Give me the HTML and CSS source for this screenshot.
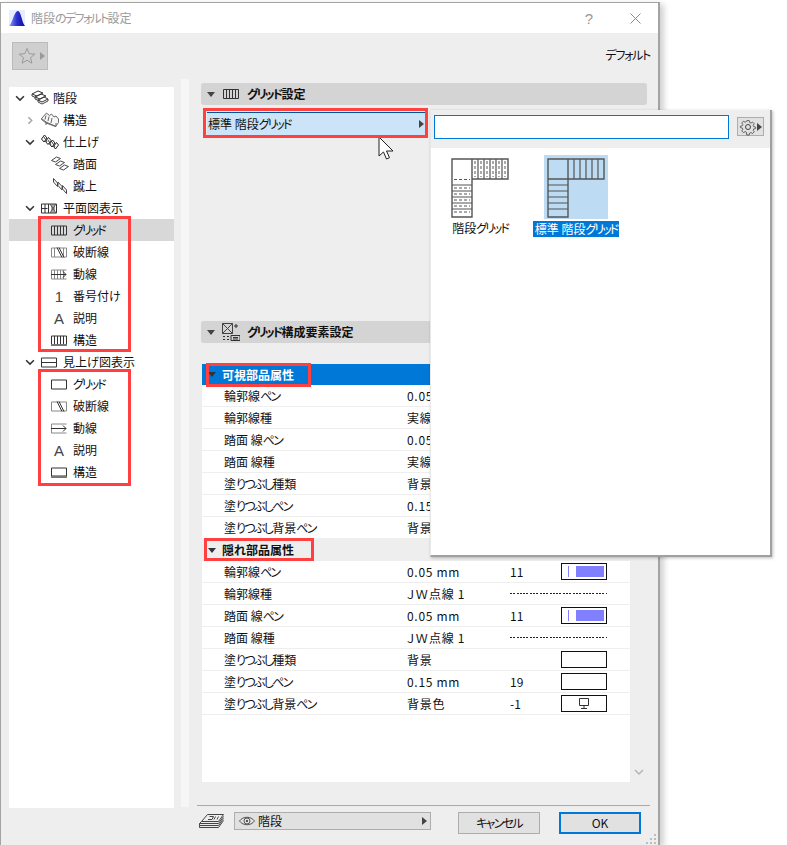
FILE: index.html
```html
<!DOCTYPE html>
<html lang="ja">
<head>
<meta charset="utf-8">
<title>階段のデフォルト設定</title>
<link rel="stylesheet" href="styles.css">
</head>
<body>
<div class="dialog">
  <header class="titlebar">
    <svg class="logo" width="16" height="16" viewBox="0 0 16 16"><defs><linearGradient id="lg" x1="0" x2="1" y1="0" y2="0"><stop offset="0" stop-color="#8f9cf5"/><stop offset=".5" stop-color="#2a2fd0"/><stop offset="1" stop-color="#0a0f8c"/></linearGradient></defs><rect width="16" height="16" fill="#e9ecff"/><path d="M0 16C3 15 5 1 9 1C12 1 13 13 16 16Z" fill="url(#lg)"/></svg>
    <span class="title">階段<span class="k">のデフォルト</span>設定</span>
    <span class="help">?</span>
    <svg class="close" width="11" height="11" viewBox="0 0 11 11"><path d="M.5.500L10.500 10.500M10.500.500L.5 10.500" stroke="#8a8a8a" fill="none"/></svg>
  </header>
  <div class="toolbar">
    <div class="favbtn">
      <svg width="18" height="18" viewBox="0 0 18 18"><path d="M9 1.500l2.200 5.200 5.600.4-4.300 3.600 1.400 5.500L9 13.200l-4.900 3 1.400-5.500L1.200 7.100l5.600-.4z" fill="none" stroke="#9a9a9a"/></svg>
      <span class="arrow-r grey"></span>
    </div>
    <span class="deflabel k">デフォルト</span>
  </div>
  <div class="main">
    <nav class="tree">
      <div class="row lv0"><svg class="chev" viewBox="0 0 9 6"><path d="M1 1l3.500 3.500L8 1"/></svg><svg class="ic tall" viewBox="0 0 18 16"><path d="M1 4l6-3 5 2-6 3zM4 7l6-3 5 2-6 3zM7 10l6-3 4 2-6 3z" fill="none" stroke="#333"/><path d="M1 4v2l5 2M4 7v2l5 2M7 10v2l4 2 6-3V9" fill="none" stroke="#444"/></svg><span>階段</span></div>
      <div class="row lv1"><svg class="chev pale" viewBox="0 0 9 6"><path d="M3 0l3 3-3 3"/></svg><svg class="ic tall" viewBox="0 0 18 16"><path d="M.5 6.500l5-5.500 3 2.500 2-1.500 2.500 3 2-1 2.500 3v3.500l-3 4-9.500-3.500-4.500-3.500z" fill="#f6f6f6" stroke="#666"/><path d="M.5 6.500l4.500 3.500 10 4.500 0-3.500M5 3.500l-1 4M8 4.500l-1 4.500M11 6l-1 5M5 10v3" fill="none" stroke="#666"/></svg><span>構造</span></div>
      <div class="row lv1"><svg class="chev" viewBox="0 0 9 6"><path d="M1 1l3.500 3.500L8 1"/></svg><svg class="ic tall" viewBox="0 0 18 16"><path d="M.5 5l3-4 2.500 3-3 4zM4.500 7.500l3-4 2.500 3-3 4zM8.500 10l3-4 2.500 3-3 4zM12.500 12.500l3-4 2 2.500-3 4z" fill="none" stroke="#222"/><path d="M3 3l3 5M7 6l3 5M11 8l3 5" stroke="#444" fill="none"/></svg><span>仕上げ</span></div>
      <div class="row lv2"><svg class="ic tall" viewBox="0 0 18 16"><path d="M.5 4.500l5-3.500 4 1.500-5 3.500zM4.500 8.500l5-3.500 4 1.500-5 3.500zM8.500 12.500l5-3.500 4 1.500-5 3.500z" fill="none" stroke="#444"/></svg><span>踏面</span></div>
      <div class="row lv2"><svg class="ic tall" viewBox="0 0 18 16"><path d="M2.500.500l4 4.500v3.500l-4-4.500zM7 4l4 4.500v3.500l-4-4.500zM11.500 7.500l4 4.500v3.500l-4-4.500z" fill="none" stroke="#444"/></svg><span>蹴上</span></div>
      <div class="row lv1"><svg class="chev" viewBox="0 0 9 6"><path d="M1 1l3.500 3.500L8 1"/></svg><svg class="ic" viewBox="0 0 16 12"><path d="M.5 1.500h15v9H.5zM.5 6h6M4 1.500v9M7.500 1.500v9" fill="none" stroke="#333"/><path d="M9 1.500l6 9M15 1.500l-6 9M11 1.500v9M13 1.500v9" stroke="#555"/></svg><span>平面図表示</span></div>
      <div class="row lv2 selected"><svg class="ic" viewBox="0 0 16 12"><path d="M.5 1.500h15v9H.5zM3.500 1.500v9M6.500 1.500v9M9.500 1.500v9M12.500 1.500v9" fill="none" stroke="#333"/></svg><span class="k2">グリッド</span></div>
      <div class="row lv2"><svg class="ic" viewBox="0 0 16 12"><path d="M.5 1.500h15v9H.5zM3.500 1.500v9M12.500 1.500v9" fill="none" stroke="#888"/><path d="M6 1l5 10M8 1l5 10" stroke="#333"/></svg><span>破断線</span></div>
      <div class="row lv2"><svg class="ic" viewBox="0 0 16 12"><path d="M.5 1.500h15M.5 10.500h15M.5 1.500v9M3.500 1.500v9M6.500 1.500v9M9.500 1.500v9M12.500 1.500v9" fill="none" stroke="#888"/><path d="M0 6h15M12 3l3 3-3 3" fill="none" stroke="#333"/></svg><span>動線</span></div>
      <div class="row lv2"><span class="ic glyph">1</span><span>番号付け</span></div>
      <div class="row lv2"><span class="ic glyph">A</span><span>説明</span></div>
      <div class="row lv2"><svg class="ic" viewBox="0 0 16 12"><path d="M.5 1.500h15M3.500 1.500v8M6.500 1.500v8M9.500 1.500v8M12.500 1.500v8M.5 1.500v8M15.500 1.500v8" fill="none" stroke="#333"/><path d="M0 10.500h16" stroke="#777" stroke-width="2"/></svg><span>構造</span></div>
      <div class="row lv1"><svg class="chev" viewBox="0 0 9 6"><path d="M1 1l3.500 3.500L8 1"/></svg><svg class="ic" viewBox="0 0 16 12"><path d="M.5 1.500h15v9H.5zM.5 6h15" fill="none" stroke="#333"/></svg><span>見上げ図表示</span></div>
      <div class="row lv2"><svg class="ic" viewBox="0 0 16 12"><path d="M.5 1.500h15v9H.5z" fill="none" stroke="#333"/></svg><span class="k2">グリッド</span></div>
      <div class="row lv2"><svg class="ic" viewBox="0 0 16 12"><path d="M.5 1.500h15v9H.5z" fill="none" stroke="#888"/><path d="M6 1l5 10M8 1l5 10" stroke="#333"/></svg><span>破断線</span></div>
      <div class="row lv2"><svg class="ic" viewBox="0 0 16 12"><path d="M.5 1.500h15M.5 10.500h15M.5 1.500v9" fill="none" stroke="#888"/><path d="M0 6h15M12 3l3 3-3 3" fill="none" stroke="#333"/></svg><span>動線</span></div>
      <div class="row lv2"><span class="ic glyph">A</span><span>説明</span></div>
      <div class="row lv2"><svg class="ic" viewBox="0 0 16 12"><path d="M.5 1.500h15v8H.5z" fill="none" stroke="#333"/><path d="M0 10.500h16" stroke="#777" stroke-width="2"/></svg><span>構造</span></div>
    </nav>
    <div class="splitter"></div>
    <section class="content">
      <div class="secthead">
        <span class="arrow-d"></span>
        <svg class="sect-ic" width="16" height="12" viewBox="0 0 16 12"><path d="M.5 1.500h15v9H.5zM3.500 1.500v9M6.500 1.500v9M9.500 1.500v9M12.500 1.500v9" fill="none" stroke="#333"/></svg>
        <span><span class="k2">グリッド</span>設定</span>
      </div>
      <div class="favselect"><span>標準 階段<span class="k2">グリッド</span></span><span class="arrow-r"></span></div>
      <div class="secthead second">
        <span class="arrow-d"></span>
        <svg class="sect-ic big" width="18" height="18" viewBox="0 0 18 18"><path d="M.5.500h10v10H.5zM.5.500l10 10M10.500.500l-10 10" fill="none" stroke="#444"/><path d="M14 1v4M12 3h4M9 12.500h9v5H9zM11 14.500h5M11 16h5M1 13.500h2M1 16.500h2M5 13.500h2M5 16.500h2" stroke="#333" fill="none"/></svg>
        <span><span class="k2">グリッド</span>構成要素設定</span>
      </div>
      <div class="tablewrap">
        <div class="table">
          <div class="grouphead blue"><span class="arrow-d dark"></span><span>可視部品属性</span></div>
          <div class="trow"><span class="c-name">輪郭線<span class="k">ペン</span></span><span class="c-val">0.05 mm</span><span class="c-num">11</span><span class="swatch pen"></span></div>
          <div class="trow"><span class="c-name">輪郭線種</span><span class="c-val">実線</span></div>
          <div class="trow"><span class="c-name">踏面 線<span class="k">ペン</span></span><span class="c-val">0.05 mm</span><span class="c-num">11</span><span class="swatch pen"></span></div>
          <div class="trow"><span class="c-name">踏面 線種</span><span class="c-val">実線</span></div>
          <div class="trow"><span class="c-name">塗<span class="k">りつぶし</span>種類</span><span class="c-val">背景</span></div>
          <div class="trow"><span class="c-name">塗<span class="k">りつぶしペン</span></span><span class="c-val">0.15 mm</span><span class="c-num">19</span></div>
          <div class="trow"><span class="c-name">塗<span class="k">りつぶし</span>背景<span class="k">ペン</span></span><span class="c-val">背景色</span><span class="c-num">-1</span></div>
          <div class="grouphead"><span class="arrow-d dark"></span><span>隠れ部品属性</span></div>
          <div class="trow"><span class="c-name">輪郭線<span class="k">ペン</span></span><span class="c-val">0.05 mm</span><span class="c-num">11</span><span class="swatch pen"><i class="tick"></i><i class="fillbar"></i></span></div>
          <div class="trow"><span class="c-name">輪郭線種</span><span class="c-val">ＪＷ点線 1</span><span class="dashes"></span></div>
          <div class="trow"><span class="c-name">踏面 線<span class="k">ペン</span></span><span class="c-val">0.05 mm</span><span class="c-num">11</span><span class="swatch pen"><i class="tick"></i><i class="fillbar"></i></span></div>
          <div class="trow"><span class="c-name">踏面 線種</span><span class="c-val">ＪＷ点線 1</span><span class="dashes"></span></div>
          <div class="trow"><span class="c-name">塗<span class="k">りつぶし</span>種類</span><span class="c-val">背景</span><span class="c-num"></span><span class="swatch"></span></div>
          <div class="trow"><span class="c-name">塗<span class="k">りつぶしペン</span></span><span class="c-val">0.15 mm</span><span class="c-num">19</span><span class="swatch"></span></div>
          <div class="trow"><span class="c-name">塗<span class="k">りつぶし</span>背景<span class="k">ペン</span></span><span class="c-val">背景色</span><span class="c-num">-1</span><span class="swatch"><svg width="14" height="12" viewBox="0 0 14 12"><path d="M2.500.500h9v7h-9zM7 7.500v3M4 10.500h6" fill="none" stroke="#333"/></svg></span></div>
        </div>
        <div class="scrollgutter"><svg width="10" height="7" viewBox="0 0 10 7"><path d="M1 1l4 4 4-4" fill="none" stroke="#b5b5b5" stroke-width="1.500"/></svg></div>
      </div>
      <footer class="footer">
        <svg class="layer-ic" width="25" height="16" viewBox="0 0 25 16"><path d="M8.500.500h16l-5 7h-17zM2.500 7.500l-2 2h19l5-7M.5 9.500v2h19l5-7M.5 11.500v2h19l5-7M10.500 2.500h4l-1.500 3H9M16.500 2.500l-1.500 3M19.500 2.500l-1.500 3" fill="none" stroke="#444"/></svg>
        <div class="layer-combo">
          <svg width="16" height="10" viewBox="0 0 16 10"><path d="M.5 5C4 0 12 0 15.500 5 12 10 4 10 .5 5z" fill="none" stroke="#555"/><circle cx="8" cy="5" r="3" fill="none" stroke="#555"/><rect x="7" y="4" width="2" height="2" fill="#555"/></svg>
          <span>階段</span><span class="arrow-r"></span>
        </div>
        <button class="btn cancel"><span class="k">キャンセル</span></button>
        <button class="btn ok">OK</button>
      </footer>
    </section>
  </div>
  <svg class="grip" width="11" height="11" viewBox="0 0 11 11"><path d="M8 0h2v2H8zM4 4h2v2H4zM8 4h2v2H8zM0 8h2v2H0zM4 8h2v2H4zM8 8h2v2H8z" fill="#bdbdbd"/></svg>
</div>

<div class="popup">
  <div class="popup-top">
    <div class="searchbox"></div>
    <div class="gearbtn">
      <svg width="18" height="18" viewBox="0 0 18 18"><path d="M7.500 1h3l.5 2.300 1.700.8 2.100-1.200 2 2.100-1.300 2 .7 1.600 2.300.6v1.600l-2.300.6-.7 1.600 1.300 2-2 2.100-2.100-1.200-1.700.8-.5 2.300h-3L7 15.600l-1.700-.8-2.100 1.200-2-2.100 1.300-2-.7-1.600L-.5 9.700V8.100l2.300-.6.700-1.600-1.300-2 2-2.100 2.100 1.200L7 2.200z" transform="translate(1.800 1.800) scale(.8)" fill="none" stroke="#444"/><circle cx="9" cy="9" r="2.500" fill="none" stroke="#444"/></svg>
      <span class="arrow-r"></span>
    </div>
  </div>
  <div class="popup-items">
    <div class="pitem first">
      <div class="thumb">
        <svg width="58" height="60" viewBox="0 0 58 60"><path d="M1 1h20v58H1zM21 1h36v20H21z" fill="none" stroke="#555" stroke-width="1.400"/><path d="M27 1v20M33 1v20M39 1v20M45 1v20M51 1v20M1 27h20M1 33h20M1 39h20M1 45h20M1 51h20" stroke="#555" stroke-width="1.200"/><path d="M24 3v16M30 3v16M36 3v16M42 3v16M48 3v16M54 3v16M3 21.500h16M3 30h16M3 36h16M3 42h16M3 48h16M3 54h16" stroke="#555" stroke-dasharray="3 2"/></svg>
      </div>
      <span class="plabel">階段<span class="k2">グリッド</span></span>
    </div>
    <div class="pitem second-item">
      <div class="thumb on">
        <svg width="58" height="60" viewBox="0 0 58 60"><path d="M1 1h20v58H1zM21 1h36v20H21zM1 21h20" fill="none" stroke="#555" stroke-width="1.400"/><path d="M27 1v20M33 1v20M39 1v20M45 1v20M51 1v20M1 27h20M1 33h20M1 39h20M1 45h20M1 51h20" stroke="#555" stroke-width="1.200"/></svg>
      </div>
      <span class="plabel on">標準 階段<span class="k2">グリッド</span></span>
    </div>
  </div>
</div>

<svg class="cursor" width="18" height="25" viewBox="0 0 18 25"><path d="M1 1v19l4.500-4 3 7 3-1.300-3-6.700H15z" fill="#fff" stroke="#222"/></svg>

<div class="mark m1"></div>
<div class="mark m2"></div>
<div class="mark m3"></div>
<div class="mark m4"></div>
<div class="mark m5"></div>
</body>
</html>
```
FILE: styles.css
```css
* { box-sizing: border-box; }
html, body { margin: 0; padding: 0; }
body {
  width: 787px; height: 845px; overflow: hidden; position: relative; background: #fff;
  font: 12px/16px "Noto Sans CJK JP", "Liberation Sans", sans-serif;
  font-feature-settings: "palt"; color: #111;
}
svg { display: block; flex: none; }
.k { letter-spacing: -1.700px; }
.k2 { letter-spacing: -2px; }
.dialog {
  position: relative; width: 660px; height: 843px; margin-top: 2px;
  border: 1px solid #a3a3a3; border-bottom: 0; border-right-width: 2px;
  background: #eee; box-shadow: 4px 2px 6px rgba(0,0,0,.18);
  display: flex; flex-direction: column;
}
.titlebar { height: 30px; background: #fff; display: flex; align-items: center; padding-left: 8px; flex: none; }
.title { margin-left: 6px; color: #9a9a9a; font-size: 12px; }
.help { margin-left: auto; color: #999; font: 15px "Liberation Sans", sans-serif; }
.close { margin: 0 17px 0 37px; }
.toolbar { height: 50px; flex: none; display: flex; align-items: flex-start; justify-content: space-between; padding: 9px 8px 0 11px; }
.favbtn { width: 36px; height: 28px; background: #cfcfcf; border: 1px solid #bbb; display: flex; align-items: center; padding-left: 5px; gap: 4px; }
.deflabel { margin-top: 5px; letter-spacing: -1.300px; }
.main { flex: 1; display: flex; min-height: 0; }
.tree { width: 165px; margin: 4px 0 37px 8px; background: #fff; flex: none; }
.row { height: 22px; display: flex; align-items: center; color: #111; }
.lv0 { padding-left: 6px; }
.lv1 { padding-left: 16px; }
.lv2 { padding-left: 42px; }
.selected { background: #d8d8d8; }
.chev { width: 10px; height: 7px; margin-right: 6px; fill: none; stroke: #333; stroke-width: 1.400; }
.chev.pale { stroke: #aaa; }
.ic { width: 16px; height: 13px; margin-right: 6px; flex: none; }
.ic.tall { width: 18px; height: 16px; margin-right: 4px; }
.glyph { font: 15px/13px "Liberation Sans", sans-serif; text-align: center; color: #444; }
.splitter { width: 8px; margin: -4px 0 38px 7px; background: #f6f6f6; flex: none; }
.content { width: 449px; margin-left: 12px; display: flex; flex-direction: column; padding-right: 3px; }
.secthead { height: 22px; background: #d4d4d4; border-radius: 3px; display: flex; align-items: center; font-weight: 700; flex: none; padding-left: 6px; }
.secthead .sect-ic { margin: 0 8px 0 8px; }
.secthead .sect-ic.big { margin: 0 7px 0 7px; }
.secthead.second { margin-top: 186px; }
.arrow-d { width: 0; height: 0; border: 4px solid transparent; border-top: 5px solid #444; border-bottom: 0; flex: none; }
.arrow-d.dark { border-top-color: #333; }
.arrow-r { width: 0; height: 0; border: 4px solid transparent; border-left: 5px solid #444; border-right: 0; flex: none; }
.arrow-r.grey { border-left-color: #9a9a9a; }
.favselect { margin: 7px 0 0 6px; width: 218px; height: 23px; background: #cce4f7; border-top: 1px solid #005499; display: flex; align-items: center; justify-content: space-between; padding: 0 1px 0 1px; flex: none; }
.tablewrap { margin-top: 21px; height: 418px; display: flex; flex: none; }
.table { width: 428px; margin-left: 1px; background: #fff; flex: none; }
.grouphead { height: 22px; display: flex; align-items: center; gap: 6px; background: #eee; font-weight: 700; padding-left: 6px; }
.grouphead.blue { background: #0078d7; color: #fff; height: 21px; }
.trow { height: 22px; border-bottom: 1px solid #eee; display: flex; align-items: center; padding-left: 22px; background: #fff; }
.c-name { width: 183px; flex: none; }
.c-val { width: 103px; flex: none; letter-spacing: .7px; }
.c-num { width: 51px; flex: none; }
.swatch { width: 46px; height: 17px; border: 1px solid #111; display: flex; align-items: center; justify-content: center; background: #fff; position: relative; }
.tick { width: 1px; height: 11px; background: #8080ff; position: absolute; left: 6px; top: 2px; }
.fillbar { width: 28px; height: 11px; background: #8080ff; position: absolute; right: 2px; top: 2px; }
.dashes { width: 97px; height: 1px; background: repeating-linear-gradient(90deg, #222 0 2px, transparent 2px 3.300px); }
.scrollgutter { width: 17px; display: flex; align-items: flex-end; justify-content: center; padding-bottom: 6px; }
.footer { margin: 23px -4px 0 -4px; border-top: 1px solid #a9a9a9; height: 40px; display: flex; align-items: flex-start; padding-top: 6px; flex: none; position: relative; width: 453px; }
.layer-ic { margin: 2px 0 0 2px; }
.layer-combo { margin: 0 0 0 10px; width: 197px; height: 18px; background: #e1e1e1; border: 1px solid #adadad; display: flex; align-items: center; padding: 0 3px 0 4px; gap: 3px; flex: none; }
.layer-combo .arrow-r { margin-left: auto; }
.btn { height: 22px; width: 82px; background: #e1e1e1; border: 1px solid #adadad; font: inherit; font-feature-settings: "palt"; color: #111; padding: 0; }
.cancel { margin-left: 27px; }
.ok { margin-left: 19px; border: 2px solid #0078d7; }
.grip { position: absolute; right: 1px; bottom: 0; }
.popup { position: absolute; left: 430px; top: 110px; width: 342px; height: 447px; background: #fff; border-right: 2px solid #a0a0a0; border-bottom: 2px solid #a0a0a0; border-left: 1px solid #e8e8e8; box-shadow: 1px 1px 3px rgba(0,0,0,.25); }
.popup-top { height: 38px; background: #eee; display: flex; align-items: flex-start; padding: 5px 0 0 3px; }
.searchbox { width: 295px; height: 24px; background: #fff; border: 1px solid #0078d7; }
.gearbtn { margin: 2px 0 0 8px; width: 27px; height: 19px; background: #e1e1e1; border: 1px solid #adadad; display: flex; align-items: center; padding-left: 1px; }
.popup-items { display: flex; padding: 7px 0 0 0; }
.pitem { display: flex; flex-direction: column; align-items: center; }
.pitem.first { width: 88px; margin-left: 5px; padding-top: 3px; }
.pitem.second-item { width: 88px; margin-left: 8px; }
.thumb { height: 60px; }
.thumb.on { height: 64px; width: 64px; background: #bddcf3; padding: 3px; }
.plabel { margin-top: 2px; padding: 0 2px; line-height: 16px; white-space: nowrap; }
.plabel.on { background: #0078d7; color: #fff; }
.cursor { position: absolute; left: 378px; top: 136px; }
.mark { position: absolute; border: 3px solid #ff4040; pointer-events: none; }
.m1 { left: 38px; top: 216px; width: 93px; height: 136px; }
.m2 { left: 38px; top: 369px; width: 93px; height: 117px; }
.m3 { left: 203px; top: 108px; width: 225px; height: 30px; }
.m4 { left: 206px; top: 363px; width: 105px; height: 24px; }
.m5 { left: 204px; top: 538px; width: 110px; height: 23px; }
```
